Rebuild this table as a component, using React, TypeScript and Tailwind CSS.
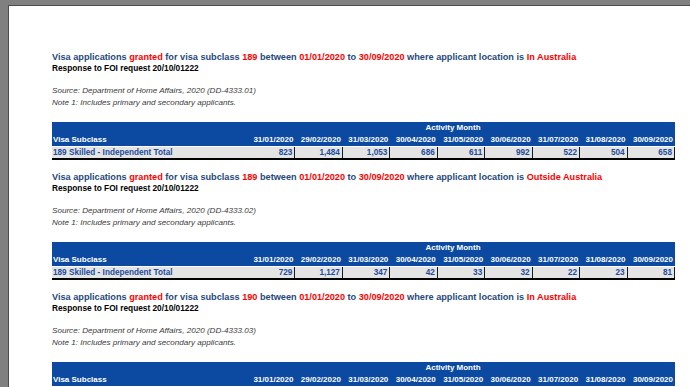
const months = [
  "31/01/2020",
  "29/02/2020",
  "31/03/2020",
  "30/04/2020",
  "31/05/2020",
  "30/06/2020",
  "31/07/2020",
  "31/08/2020",
  "30/09/2020",
]

const sections = [
  {
    subclass: "189",
    location: "In Australia",
    code: "DD-4333.01",
    label: "189 Skilled - Independent Total",
    values: ["823", "1,484", "1,053", "686", "611", "992", "522", "504", "658"],
  },
  {
    subclass: "189",
    location: "Outside Australia",
    code: "DD-4333.02",
    label: "189 Skilled - Independent Total",
    values: ["729", "1,127", "347", "42", "33", "32", "22", "23", "81"],
  },
  {
    subclass: "190",
    location: "In Australia",
    code: "DD-4333.03",
    label: "190 Skilled - Nominated Total",
    values: ["", "", "", "", "", "", "", "", ""],
  },
]

type Section = (typeof sections)[number]

function Red({ children }: { children: React.ReactNode }) {
  return <span className="text-[#ff0000]">{children}</span>
}

function Report({ s }: { s: Section }) {
  return (
    <div className="h-[120px] shrink-0">
      <div className="text-[9.16px] font-bold leading-[12px] text-[#1f497d] whitespace-nowrap">
        Visa applications <Red>granted</Red> for visa subclass <Red>{s.subclass}</Red> between{" "}
        <Red>01/01/2020</Red> to <Red>30/09/2020</Red> where applicant location is <Red>{s.location}</Red>
      </div>
      <div className="text-[8.3px] font-bold leading-[11px] text-black">Response to FOI request 20/10/01222</div>
      <div className="mt-[11px] text-[8.1px] italic leading-[12px] text-[#3a3a3a]">
        Source: Department of Home Affairs, 2020 ({s.code})
      </div>
      <div className="text-[8.1px] italic leading-[12px] text-[#3a3a3a]">
        Note 1: Includes primary and secondary applicants.
      </div>

      {/* table */}
      <div className="mt-[13px] w-[623px] text-[8px] font-bold leading-[12px]">
        <div className="grid grid-cols-[196px_repeat(9,1fr)] bg-[#0b4aa0] text-white">
          <div />
          <div className="col-span-9 pr-[17px] text-center">Activity Month</div>
          <div className="pl-px">Visa Subclass</div>
          {months.map((m) => (
            <div key={m} className="pr-[2px] text-right">
              {m}
            </div>
          ))}
        </div>
        <div className="grid grid-cols-[196px_repeat(9,1fr)] border-t border-white border-b-2 border-b-black bg-[#e4e4e4] text-[8.2px] leading-[11px] text-[#1c4b9b]">
          <div className="pl-px">{s.label}</div>
          {s.values.map((v, i) => (
            <div key={i} className="border-r border-[#1a1a1a] pr-[2px] text-right">
              {v}
            </div>
          ))}
        </div>
      </div>
    </div>
  )
}

export default function App() {
  return (
    <div
      className="h-[387px] w-[690px] overflow-hidden bg-[#808080] pl-[8px] pt-[5px]"
      style={{ fontFamily: '"Liberation Sans", Arial, sans-serif' }}
    >
      <div className="flex h-full flex-col border-l border-t border-[#4d4d4d] bg-white pl-[43px] pt-[45px]">
        {sections.map((s) => (
          <Report key={s.code} s={s} />
        ))}
      </div>
    </div>
  )
}
